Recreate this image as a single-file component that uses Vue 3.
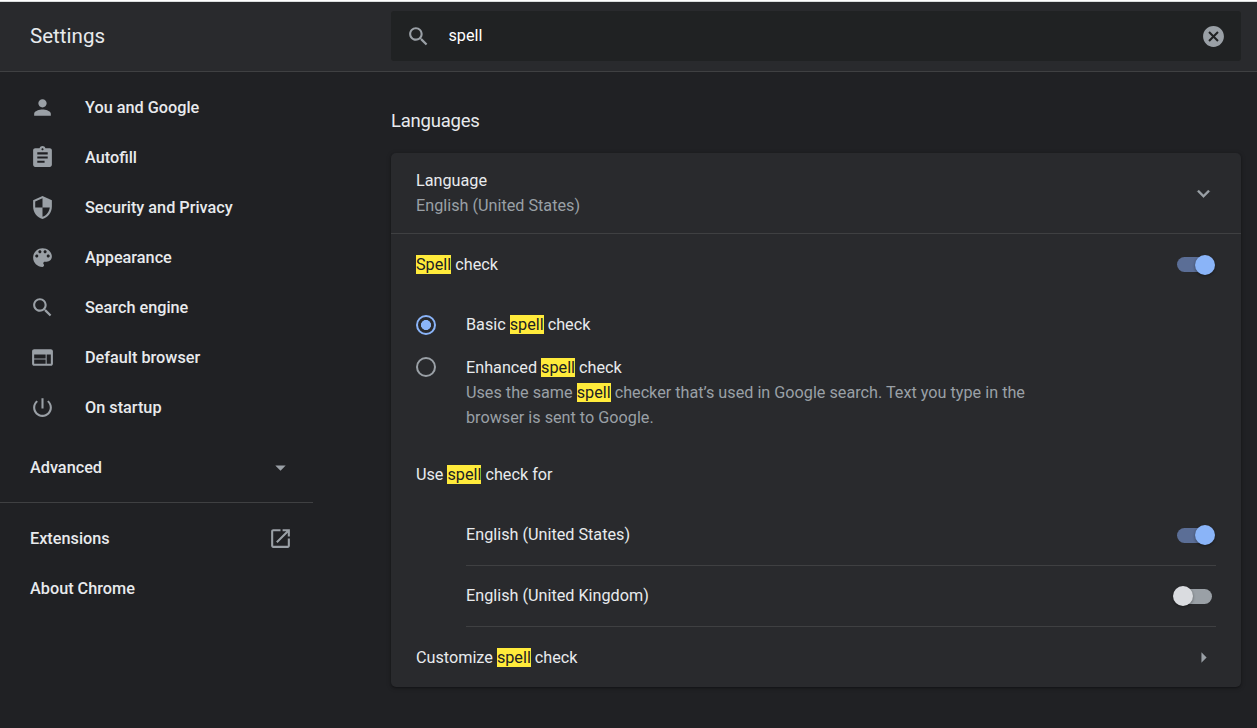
<script setup>
const nav = [
  { label: 'You and Google', icon: 'M12 12c2.21 0 4-1.79 4-4s-1.79-4-4-4-4 1.79-4 4 1.79 4 4 4zm0 2c-2.67 0-8 1.34-8 4v2h16v-2c0-2.66-5.33-4-8-4z' },
  { label: 'Autofill', icon: 'M19 3h-4.18C14.4 1.84 13.3 1 12 1c-1.3 0-2.4.84-2.82 2H5c-1.1 0-2 .9-2 2v14c0 1.1.9 2 2 2h14c1.1 0 2-.9 2-2V5c0-1.1-.9-2-2-2zm-7 0c.55 0 1 .45 1 1s-.45 1-1 1-1-.45-1-1 .45-1 1-1zm2 14H7v-2h7v2zm3-4H7v-2h10v2zm0-4H7V7h10v2z' },
  { label: 'Security and Privacy', icon: 'M12 1L3 5v6c0 5.55 3.84 10.74 9 12 5.16-1.26 9-6.45 9-12V5l-9-4zm0 10.99h7c-.53 4.12-3.28 7.79-7 8.94V12H5V6.3l7-3.11v8.8z' },
  { label: 'Appearance', icon: 'M12 3c-4.97 0-9 4.03-9 9s4.03 9 9 9c.83 0 1.5-.67 1.5-1.5 0-.39-.15-.74-.39-1.01-.23-.26-.38-.61-.38-.99 0-.83.67-1.5 1.5-1.5H16c2.76 0 5-2.24 5-5 0-4.42-4.03-8-9-8zm-5.5 9c-.83 0-1.5-.67-1.5-1.5S5.67 9 6.5 9 8 9.67 8 10.5 7.33 12 6.5 12zm3-4C8.67 8 8 7.33 8 6.5S8.67 5 9.5 5s1.5.67 1.5 1.5S10.33 8 9.5 8zm5 0c-.83 0-1.5-.67-1.5-1.5S13.67 5 14.5 5s1.5.67 1.5 1.5S15.33 8 14.5 8zm3 4c-.83 0-1.5-.67-1.5-1.5S16.67 9 17.5 9s1.5.67 1.5 1.5-.67 1.5-1.5 1.5z' },
  { label: 'Search engine', icon: 'M15.5 14h-.79l-.28-.27C15.41 12.59 16 11.11 16 9.5 16 5.91 13.09 3 9.5 3S3 5.91 3 9.5 5.91 16 9.5 16c1.61 0 3.09-.59 4.23-1.57l.27.28v.79l5 4.99L20.49 19l-4.99-5zm-6 0C7.01 14 5 11.99 5 9.5S7.01 5 9.5 5 14 7.01 14 9.5 11.99 14 9.5 14z' },
  { label: 'Default browser', icon: 'M20 4H4c-1.1 0-1.99.9-1.99 2L2 18c0 1.1.9 2 2 2h16c1.1 0 2-.9 2-2V6c0-1.1-.9-2-2-2zm-5 14H4v-4h11v4zm0-5H4V9h11v4zm5 5h-4V9h4v9z' },
  { label: 'On startup', icon: 'M13 3h-2v10h2V3zm4.83 2.17l-1.42 1.42C17.99 7.86 19 9.81 19 12c0 3.87-3.13 7-7 7s-7-3.13-7-7c0-2.19 1.01-4.14 2.58-5.42L6.17 5.17C4.23 6.82 3 9.26 3 12c0 4.97 4.03 9 9 9s9-4.03 9-9c0-2.74-1.23-5.18-3.17-6.83z' },
]
const searchIcon = nav[4].icon
const dictionaries = [
  { name: 'English (United States)', on: true },
  { name: 'English (United Kingdom)', on: false },
]
</script>

<template>
  <div class="page">
    <header class="toolbar">
      <h1>Settings</h1>
      <div class="search">
        <svg class="icon" viewBox="0 0 24 24"><path :d="searchIcon" /></svg>
        <span class="query">spell</span>
        <svg class="icon clear" viewBox="0 0 24 24"><path d="M12 2C6.47 2 2 6.47 2 12s4.47 10 10 10 10-4.47 10-10S17.53 2 12 2zm5 13.59L15.59 17 12 13.41 8.41 17 7 15.59 10.59 12 7 8.41 8.41 7 12 10.59 15.59 7 17 8.41 13.41 12 17 15.59z" /></svg>
      </div>
    </header>
    <div class="body">
      <nav class="sidebar">
        <a v-for="n in nav" :key="n.label" class="item">
          <svg class="icon" viewBox="0 0 24 24"><path :d="n.icon" /></svg>
          <span>{{ n.label }}</span>
        </a>
        <a class="item advanced">
          <span>Advanced</span>
          <svg class="icon" viewBox="0 0 24 24"><path d="M7 10l5 5 5-5z" /></svg>
        </a>
        <div class="rule"></div>
        <a class="item end">
          <span>Extensions</span>
          <svg class="icon" viewBox="0 0 24 24"><path d="M19 19H5V5h7V3H5c-1.11 0-2 .9-2 2v14c0 1.1.89 2 2 2h14c1.1 0 2-.9 2-2v-7h-2v7zM14 3v2h3.59l-9.83 9.83 1.41 1.41L19 6.41V10h2V3h-7z" /></svg>
        </a>
        <a class="item end"><span>About Chrome</span></a>
      </nav>
      <main>
        <h2>Languages</h2>
        <section class="card">
          <div class="row language">
            <div>
              <div>Language</div>
              <div class="sub">English (United States)</div>
            </div>
            <svg class="icon" viewBox="0 0 24 24"><path d="M16.59 8.59L12 13.17 7.41 8.59 6 10l6 6 6-6z" /></svg>
          </div>
          <div class="row spell">
            <span><mark>Spell</mark> check</span>
            <span class="toggle on"><i class="bar"></i><i class="knob"></i></span>
          </div>
          <div class="choice basic">
            <span class="radio checked"></span>
            <div>Basic <mark>spell</mark> check</div>
          </div>
          <div class="choice enhanced">
            <span class="radio"></span>
            <div>
              <div>Enhanced <mark>spell</mark> check</div>
              <div class="sub">Uses the same <mark>spell</mark> checker that’s used in Google search. Text you type in the browser is sent to Google.</div>
            </div>
          </div>
          <div class="row use"><span>Use <mark>spell</mark> check for</span></div>
          <div class="dicts">
            <div v-for="d in dictionaries" :key="d.name" class="dict">
              <span class="name">{{ d.name }}</span>
              <span class="toggle" :class="{ on: d.on }"><i class="bar"></i><i class="knob"></i></span>
            </div>
          </div>
          <div class="row customize">
            <span>Customize <mark>spell</mark> check</span>
            <svg class="icon" viewBox="0 0 24 24"><path d="M10 7l5 5-5 5z" /></svg>
          </div>
        </section>
      </main>
    </div>
  </div>
</template>

<style>
html, body { margin: 0; background: #202124; }
</style>
<style scoped>
* { box-sizing: border-box; }
.page {
  height: 728px;
  overflow: hidden;
  background: #202124;
  color: #e8eaed;
  font: 400 16.22px/25px Roboto, sans-serif;
}
h1, h2 { margin: 0; font-weight: 400; }
.icon { width: 25px; height: 25px; flex: none; fill: #9aa0a6; display: block; }
.toolbar {
  height: 71px;
  display: flex;
  padding-top: 9px;
  background: #292a2d;
  border-top: 1px solid #dadddd;
  border-bottom: 1px solid #3f4042;
}
.page { border-top: 1px solid #fff; }
.toolbar h1 { width: 391px; padding-left: 30px; font-size: 20.55px; line-height: 50px; }
.search {
  width: 850px;
  height: 50px;
  display: flex;
  align-items: center;
  padding: 0 15px;
  background: #202223;
  border-radius: 3px;
}
.query { flex: 1; margin-left: 17.5px; padding-bottom: 2px; color: #fff; }
.body { display: flex; }
.sidebar { width: 391px; padding-top: 10px; font-weight: 500; font-size: 16.25px; }
.item { height: 50px; padding-left: 30px; display: flex; align-items: center; }
.item .icon + span { margin-left: 30px; }
.item.advanced, .item.end { width: 293px; justify-content: space-between; }
.advanced { margin-top: 10px; }
.rule { width: 313px; height: 1px; background: #3f4042; margin: 10px 0; }
main { width: 850px; padding-top: 33px; }
h2 { font-size: 18.5px; letter-spacing: -0.22px; line-height: 32px; }
.card {
  margin-top: 16px;
  height: 534px;
  background: #292a2d;
  border-radius: 5px;
  box-shadow: 0 1px 2px rgba(0, 0, 0, .3), 0 1px 4px 1px rgba(0, 0, 0, .15);
}
.row { display: flex; align-items: center; justify-content: space-between; padding: 0 25px; }
.language { height: 81px; border-bottom: 1px solid #3f4042; }
.language .icon { stroke: #9aa0a6; stroke-width: .3; }
.sub { color: #9aa0a6; }
mark { background: #ffeb3b; color: #202124; }
.spell { height: 61px; }
.toggle { position: relative; width: 42.5px; height: 20px; }
.bar { position: absolute; left: 3.5px; top: 2.5px; width: 35px; height: 15px; border-radius: 10px; background: #9aa0a6; }
.knob { position: absolute; left: -0.5px; top: 0; width: 20px; height: 20px; border-radius: 50%; background: #dadce0; box-shadow: 0 1px 3px rgba(0, 0, 0, .4); }
.on .bar { background: #5b6e96; }
.on .knob { left: 21.7px; background: #8ab4f8; }
.choice { display: flex; padding: 0 25px; }
.choice > div { width: 575px; margin-left: 30px; }
.radio { width: 20px; height: 20px; flex: none; border: 2px solid #9aa0a6; border-radius: 50%; }
.radio.checked { border-color: #8ab4f8; background: radial-gradient(circle, #8ab4f8 4.7px, transparent 5.3px); }
.basic { margin-top: 17px; height: 43px; }
.basic .radio { margin-top: 3px; }
.enhanced .radio { margin-top: 2px; }
.use { margin-top: 14px; height: 61px; }
.dicts { padding: 0 25px 0 75px; }
.dict { height: 61px; display: flex; align-items: center; justify-content: space-between; border-bottom: 1px solid #3f4042; }
.name { padding-bottom: 1px; }
.customize { height: 60px; }
</style>
